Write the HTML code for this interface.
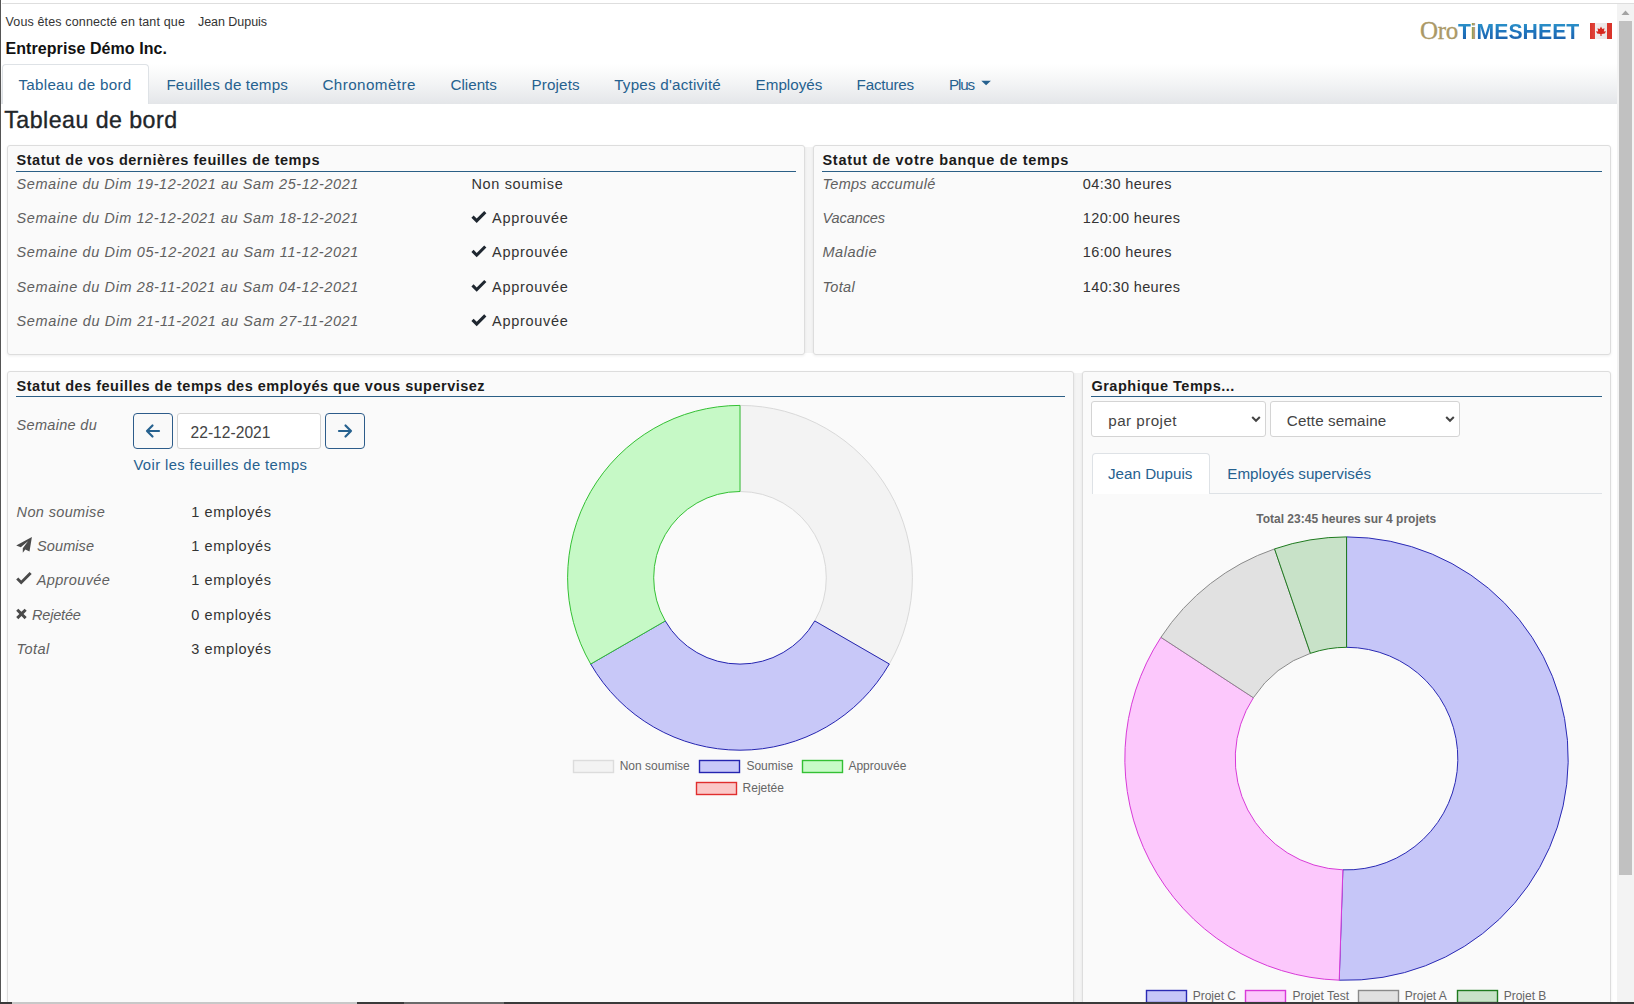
<!DOCTYPE html>
<html lang="fr">
<head>
<meta charset="utf-8">
<title>Tableau de bord - OroTimesheet</title>
<style>
html,body{margin:0;padding:0;}
body{width:1634px;height:1004px;overflow:hidden;position:relative;background:#fff;font-family:"Liberation Sans",sans-serif;}
.t{position:absolute;white-space:nowrap;line-height:1;font-family:"Liberation Sans",sans-serif;}
.b{position:absolute;box-sizing:border-box;}
.card{position:absolute;box-sizing:border-box;background:#fafafa;border:1px solid #dddddd;border-radius:3px;box-shadow:0 1px 3px rgba(0,0,0,.07);}
.hl{position:absolute;height:1px;background:#2b5f86;}
svg{position:absolute;left:0;top:0;overflow:visible;}
</style>
</head>
<body>
<!-- window frame -->
<div class="b" style="left:0;top:0;width:1px;height:1004px;background:#555;"></div>
<div class="b" style="left:2px;top:3px;width:1632px;height:1px;background:#dedede;"></div>

<!-- nav bar -->
<div class="b" style="left:1px;top:64px;width:1616px;height:40px;background:linear-gradient(#ffffff 0%,#f4f5f6 45%,#e4e6e9 100%);"></div>
<div class="b" style="left:1.5px;top:64px;width:147.5px;height:40px;background:#fff;border:1px solid #dee2e6;border-bottom:none;border-radius:4px 4px 0 0;"></div>
<svg width="1634" height="1004" style="pointer-events:none">
  <path d="M981.3,80.8 L990.9,80.8 L986.1,85.2 Z" fill="#26618f"/>
</svg>

<!-- logo -->
<div class="t" style="left:1420px;top:18px;font-family:'Liberation Serif',serif;font-size:25px;color:#ab9966;letter-spacing:-0.3px;-webkit-text-stroke:0.3px #ab9966;">Oro</div>
<div class="t" style="left:1458px;top:21px;font-size:21.2px;font-weight:bold;letter-spacing:0.05px;background:linear-gradient(#2f9ccc 0%,#2077bf 45%,#1a5eaa 100%);-webkit-background-clip:text;background-clip:text;color:transparent;">T<span style="-webkit-text-fill-color:#b39f63;">i</span>MESHEET</div>
<div class="b" style="left:1590px;top:23px;width:22px;height:16px;background:linear-gradient(90deg,#d9342a 0,#e0463c 5px,#f2eeee 5px,#e9e4e4 17px,#d9342a 17px);"></div>
<svg width="1634" height="1004"><path d="M1601,26.5 L1602.3,29 L1604.5,28.2 L1603.8,31.5 L1606,31.2 L1604.8,33.5 L1601.6,34 L1601.6,36 L1600.4,36 L1600.4,34 L1597.2,33.5 L1596,31.2 L1598.2,31.5 L1597.5,28.2 L1599.7,29 Z" fill="#d7261c"/></svg>

<!-- scrollbar -->
<div class="b" style="left:1617px;top:4px;width:17px;height:998px;background:#f3f3f3;"></div>
<div class="b" style="left:1619px;top:21px;width:13px;height:854px;background:#c1c1c1;"></div>
<svg width="1634" height="1004"><path d="M1621.5,15 L1629.5,15 L1625.5,10.5 Z" fill="#a3a3a3"/></svg>

<!-- cards -->
<div class="b" style="left:803px;top:147px;width:12px;height:206px;background:#f4f4f4;"></div>
<div class="b" style="left:1072px;top:373px;width:12px;height:640px;background:#f4f4f4;"></div>
<div class="card" style="left:7px;top:145px;width:798px;height:210px;"></div>
<div class="card" style="left:813px;top:145px;width:798px;height:210px;"></div>
<div class="card" style="left:7px;top:371px;width:1067px;height:660px;"></div>
<div class="card" style="left:1082px;top:371px;width:529px;height:660px;"></div>

<div class="hl" style="left:16px;top:171px;width:780px;"></div>
<div class="hl" style="left:822px;top:171px;width:780px;"></div>
<div class="hl" style="left:16px;top:396px;width:1049px;"></div>
<div class="hl" style="left:1091px;top:396px;width:511px;"></div>

<!-- card3 controls -->
<div class="b" style="left:133px;top:413px;width:40px;height:36px;border:1.3px solid #2d5c8a;border-radius:4px;background:#f9f9f9;"></div>
<div class="b" style="left:177px;top:413px;width:144px;height:36px;border:1px solid #d4d4d4;border-radius:3px;background:#fff;"></div>
<div class="b" style="left:325px;top:413px;width:40px;height:36px;border:1.3px solid #2d5c8a;border-radius:4px;background:#f9f9f9;"></div>

<!-- card4 controls -->
<div class="b" style="left:1091px;top:401px;width:175px;height:36px;border:1px solid #d4d4d4;border-radius:3px;background:#fff;"></div>
<div class="b" style="left:1270px;top:401px;width:190px;height:36px;border:1px solid #d4d4d4;border-radius:3px;background:#fff;"></div>
<div class="b" style="left:1209px;top:493px;width:393px;height:1px;background:#dee2e6;"></div>
<div class="b" style="left:1091.5px;top:453px;width:118.5px;height:41px;border:1px solid #dee2e6;border-bottom:none;border-radius:4px 4px 0 0;background:#fff;"></div>

<!-- icons -->
<svg width="1634" height="1004">
  <!-- card1 checks -->
  <g fill="#1f2730">
    <path transform="translate(471.4,211.5)" d="M0,6.2 L2.2,4 L5.3,7.1 L12.8,-0.4 L15,1.8 L5.3,11.5 Z"/>
    <path transform="translate(471.4,245.8)" d="M0,6.2 L2.2,4 L5.3,7.1 L12.8,-0.4 L15,1.8 L5.3,11.5 Z"/>
    <path transform="translate(471.4,280.3)" d="M0,6.2 L2.2,4 L5.3,7.1 L12.8,-0.4 L15,1.8 L5.3,11.5 Z"/>
    <path transform="translate(471.4,314.7)" d="M0,6.2 L2.2,4 L5.3,7.1 L12.8,-0.4 L15,1.8 L5.3,11.5 Z"/>
  </g>
  <!-- card3 icons -->
  <g fill="#4a4a4a">
    <path d="M31.9,537 L16.2,545.5 L20.8,547.3 L28,541.2 L22.8,548.3 L22.8,552.7 L25.3,549.6 L29.5,551.4 Z"/>
    <path d="M16.2,578.6 L18.3,576.5 L21.2,579.4 L29.6,571 L31.7,573.1 L21.2,583.6 Z" transform="translate(0,1)"/>
    <path d="M16.2,610.8 L18.3,608.7 L21.45,611.85 L24.6,608.7 L26.7,610.8 L23.55,613.95 L26.7,617.1 L24.6,619.2 L21.45,616.05 L18.3,619.2 L16.2,617.1 L19.35,613.95 Z"/>
  </g>
  <!-- arrows -->
  <g fill="none" stroke="#26618f" stroke-width="2.2" stroke-linecap="round" stroke-linejoin="round">
    <path d="M159,431 L147,431 M152.5,425.5 L147,431 L152.5,436.5"/>
    <path d="M339,431 L351,431 M345.5,425.5 L351,431 L345.5,436.5"/>
  </g>
  <!-- select chevrons -->
  <g fill="none" stroke="#444" stroke-width="2" stroke-linecap="butt" stroke-linejoin="miter">
    <path d="M1252.2,417 L1256,420.8 L1259.8,417"/>
    <path d="M1446.2,417 L1450,420.8 L1453.8,417"/>
  </g>
  <!-- charts -->
  <path d="M740.00,405.40 A172.4,172.4 0 0 1 889.30,664.00 L814.74,620.95 A86.3,86.3 0 0 0 740.00,491.50 Z" fill="#f3f3f3" stroke="#d9d9d9" stroke-width="1"/><path d="M889.30,664.00 A172.4,172.4 0 0 1 590.70,664.00 L665.26,620.95 A86.3,86.3 0 0 0 814.74,620.95 Z" fill="#c8c8f8" stroke="#2424b0" stroke-width="1"/><path d="M590.70,664.00 A172.4,172.4 0 0 1 740.00,405.40 L740.00,491.50 A86.3,86.3 0 0 0 665.26,620.95 Z" fill="#c6f9c6" stroke="#34c034" stroke-width="1"/>
  <path d="M1346.55,536.90 A221.7,221.7 0 1 1 1339.22,980.18 L1342.87,869.84 A111.3,111.3 0 1 0 1346.55,647.30 Z" fill="#c6c6f8" stroke="#2a2ab4" stroke-width="1"/><path d="M1339.22,980.18 A221.7,221.7 0 0 1 1160.95,637.34 L1253.37,697.72 A111.3,111.3 0 0 0 1342.87,869.84 Z" fill="#fcc8fc" stroke="#d83ad8" stroke-width="1"/><path d="M1160.95,637.34 A221.7,221.7 0 0 1 1274.56,548.91 L1310.41,653.33 A111.3,111.3 0 0 0 1253.37,697.72 Z" fill="#e1e1e1" stroke="#8a8a8a" stroke-width="1"/><path d="M1274.56,548.91 A221.7,221.7 0 0 1 1346.55,536.90 L1346.55,647.30 A111.3,111.3 0 0 0 1310.41,653.33 Z" fill="#c8e2c8" stroke="#1e7a1e" stroke-width="1"/>
  <!-- legend boxes -->
  <g stroke-width="1.4">
    <rect x="573.5" y="760.5" width="40" height="12" fill="#f3f3f3" stroke="#dcdcdc"/>
    <rect x="699.5" y="760.5" width="40" height="12" fill="#c8c8f9" stroke="#2424b0"/>
    <rect x="802.5" y="760.5" width="40" height="12" fill="#c8fbc8" stroke="#34c034"/>
    <rect x="696.5" y="782.5" width="40" height="12" fill="#fbc8c8" stroke="#e02e2e"/>
    <rect x="1146.5" y="990.5" width="40" height="12" fill="#c6c6f8" stroke="#2a2ab4"/>
    <rect x="1245.5" y="990.5" width="40" height="12" fill="#fcc8fc" stroke="#d83ad8"/>
    <rect x="1358.5" y="990.5" width="40" height="12" fill="#e1e1e1" stroke="#8a8a8a"/>
    <rect x="1457.5" y="990.5" width="40" height="12" fill="#c8e2c8" stroke="#1e7a1e"/>
  </g>
</svg>

<div class="t" style="left:5.50px;top:16px;font-size:12.5px;letter-spacing:0.145px;color:#333">Vous êtes connecté en tant que</div>
<div class="t" style="left:198.00px;top:16px;font-size:12.5px;letter-spacing:-0.045px;color:#333">Jean Dupuis</div>
<div class="t" style="left:5.50px;top:41px;font-size:16px;letter-spacing:0.073px;color:#111;font-weight:bold">Entreprise Démo Inc.</div>
<div class="t" style="left:18.40px;top:77px;font-size:15.2px;letter-spacing:0.284px;color:#26618f">Tableau de bord</div>
<div class="t" style="left:166.40px;top:77px;font-size:15.2px;letter-spacing:0.151px;color:#26618f">Feuilles de temps</div>
<div class="t" style="left:322.40px;top:77px;font-size:15.2px;letter-spacing:0.442px;color:#26618f">Chronomètre</div>
<div class="t" style="left:450.40px;top:77px;font-size:15.2px;letter-spacing:0.023px;color:#26618f">Clients</div>
<div class="t" style="left:531.60px;top:77px;font-size:15.2px;letter-spacing:0.117px;color:#26618f">Projets</div>
<div class="t" style="left:614.20px;top:77px;font-size:15.2px;letter-spacing:0.215px;color:#26618f">Types d'activité</div>
<div class="t" style="left:755.60px;top:77px;font-size:15.2px;letter-spacing:0.002px;color:#26618f">Employés</div>
<div class="t" style="left:856.60px;top:77px;font-size:15.2px;letter-spacing:-0.212px;color:#26618f">Factures</div>
<div class="t" style="left:949.00px;top:77px;font-size:15.2px;letter-spacing:-1.137px;color:#26618f">Plus</div>
<div class="t" style="left:4.30px;top:109px;font-size:23.2px;letter-spacing:0.459px;color:#212529;-webkit-text-stroke:0.35px #212529">Tableau de bord</div>
<div class="t" style="left:16.50px;top:153px;font-size:14.5px;letter-spacing:0.523px;color:#1b1b1b;font-weight:bold">Statut de vos dernières feuilles de temps</div>
<div class="t" style="left:16.50px;top:177px;font-size:14.5px;letter-spacing:0.579px;color:#606060;font-style:italic">Semaine du Dim 19-12-2021 au Sam 25-12-2021</div>
<div class="t" style="left:16.50px;top:211px;font-size:14.5px;letter-spacing:0.579px;color:#606060;font-style:italic">Semaine du Dim 12-12-2021 au Sam 18-12-2021</div>
<div class="t" style="left:16.50px;top:245px;font-size:14.5px;letter-spacing:0.604px;color:#606060;font-style:italic">Semaine du Dim 05-12-2021 au Sam 11-12-2021</div>
<div class="t" style="left:16.50px;top:280px;font-size:14.5px;letter-spacing:0.604px;color:#606060;font-style:italic">Semaine du Dim 28-11-2021 au Sam 04-12-2021</div>
<div class="t" style="left:16.50px;top:314px;font-size:14.5px;letter-spacing:0.629px;color:#606060;font-style:italic">Semaine du Dim 21-11-2021 au Sam 27-11-2021</div>
<div class="t" style="left:471.40px;top:177px;font-size:14.5px;letter-spacing:0.670px;color:#333">Non soumise</div>
<div class="t" style="left:492.00px;top:211px;font-size:14.5px;letter-spacing:0.707px;color:#333">Approuvée</div>
<div class="t" style="left:492.00px;top:245px;font-size:14.5px;letter-spacing:0.707px;color:#333">Approuvée</div>
<div class="t" style="left:492.00px;top:280px;font-size:14.5px;letter-spacing:0.707px;color:#333">Approuvée</div>
<div class="t" style="left:492.00px;top:314px;font-size:14.5px;letter-spacing:0.707px;color:#333">Approuvée</div>
<div class="t" style="left:822.50px;top:153px;font-size:14.5px;letter-spacing:0.700px;color:#1b1b1b;font-weight:bold">Statut de votre banque de temps</div>
<div class="t" style="left:822.50px;top:177px;font-size:14.5px;letter-spacing:0.280px;color:#606060;font-style:italic">Temps accumulé</div>
<div class="t" style="left:1082.80px;top:177px;font-size:14.5px;letter-spacing:0.362px;color:#333">04:30 heures</div>
<div class="t" style="left:822.50px;top:211px;font-size:14.5px;letter-spacing:-0.080px;color:#606060;font-style:italic">Vacances</div>
<div class="t" style="left:1082.80px;top:211px;font-size:14.5px;letter-spacing:0.368px;color:#333">120:00 heures</div>
<div class="t" style="left:822.50px;top:245px;font-size:14.5px;letter-spacing:0.531px;color:#606060;font-style:italic">Maladie</div>
<div class="t" style="left:1082.80px;top:245px;font-size:14.5px;letter-spacing:0.362px;color:#333">16:00 heures</div>
<div class="t" style="left:822.50px;top:280px;font-size:14.5px;letter-spacing:0.319px;color:#606060;font-style:italic">Total</div>
<div class="t" style="left:1082.80px;top:280px;font-size:14.5px;letter-spacing:0.368px;color:#333">140:30 heures</div>
<div class="t" style="left:16.60px;top:379px;font-size:14.5px;letter-spacing:0.494px;color:#1b1b1b;font-weight:bold">Statut des feuilles de temps des employés que vous supervisez</div>
<div class="t" style="left:16.60px;top:418px;font-size:14.5px;letter-spacing:0.311px;color:#606060;font-style:italic">Semaine du</div>
<div class="t" style="left:190.50px;top:425px;font-size:15.6px;letter-spacing:0.022px;color:#444">22-12-2021</div>
<div class="t" style="left:133.40px;top:458px;font-size:14.8px;letter-spacing:0.397px;color:#26618f">Voir les feuilles de temps</div>
<div class="t" style="left:16.60px;top:505px;font-size:14.5px;letter-spacing:0.352px;color:#606060;font-style:italic">Non soumise</div>
<div class="t" style="left:37.10px;top:539px;font-size:14.5px;letter-spacing:0.083px;color:#606060;font-style:italic">Soumise</div>
<div class="t" style="left:36.70px;top:573px;font-size:14.5px;letter-spacing:0.373px;color:#606060;font-style:italic">Approuvée</div>
<div class="t" style="left:32.10px;top:608px;font-size:14.5px;letter-spacing:-0.212px;color:#606060;font-style:italic">Rejetée</div>
<div class="t" style="left:16.60px;top:642px;font-size:14.5px;letter-spacing:0.419px;color:#606060;font-style:italic">Total</div>
<div class="t" style="left:191.20px;top:505px;font-size:14.5px;letter-spacing:0.634px;color:#333">1 employés</div>
<div class="t" style="left:191.20px;top:539px;font-size:14.5px;letter-spacing:0.634px;color:#333">1 employés</div>
<div class="t" style="left:191.20px;top:573px;font-size:14.5px;letter-spacing:0.634px;color:#333">1 employés</div>
<div class="t" style="left:191.20px;top:608px;font-size:14.5px;letter-spacing:0.634px;color:#333">0 employés</div>
<div class="t" style="left:191.20px;top:642px;font-size:14.5px;letter-spacing:0.634px;color:#333">3 employés</div>
<div class="t" style="left:1091.40px;top:379px;font-size:14.5px;letter-spacing:0.512px;color:#1b1b1b;font-weight:bold">Graphique Temps...</div>
<div class="t" style="left:1108.30px;top:413px;font-size:15.2px;letter-spacing:0.453px;color:#444">par projet</div>
<div class="t" style="left:1286.80px;top:413px;font-size:15.2px;letter-spacing:0.120px;color:#444">Cette semaine</div>
<div class="t" style="left:1108.00px;top:466px;font-size:15.2px;letter-spacing:-0.003px;color:#26618f">Jean Dupuis</div>
<div class="t" style="left:1227.30px;top:466px;font-size:15.2px;letter-spacing:0.011px;color:#26618f">Employés supervisés</div>
<div class="t" style="left:1256.28px;top:513px;font-size:12px;letter-spacing:0.000px;color:#666;font-weight:bold">Total 23:45 heures sur 4 projets</div>
<div class="t" style="left:619.70px;top:760px;font-size:12px;letter-spacing:0.000px;color:#666">Non soumise</div>
<div class="t" style="left:746.40px;top:760px;font-size:12px;letter-spacing:0.000px;color:#666">Soumise</div>
<div class="t" style="left:848.40px;top:760px;font-size:12px;letter-spacing:0.000px;color:#666">Approuvée</div>
<div class="t" style="left:742.60px;top:782px;font-size:12px;letter-spacing:0.000px;color:#666">Rejetée</div>
<div class="t" style="left:1192.70px;top:990px;font-size:12px;letter-spacing:0.000px;color:#666">Projet C</div>
<div class="t" style="left:1292.50px;top:990px;font-size:12px;letter-spacing:0.000px;color:#666">Projet Test</div>
<div class="t" style="left:1404.80px;top:990px;font-size:12px;letter-spacing:0.000px;color:#666">Projet A</div>
<div class="t" style="left:1503.70px;top:990px;font-size:12px;letter-spacing:0.000px;color:#666">Projet B</div>

<!-- bottom taskbar edge -->
<div class="b" style="left:0;top:1002px;width:1634px;height:2px;background:#3a3a3a;"></div>
<div class="b" style="left:12px;top:1002px;width:345px;height:2px;background:#c8c8c8;"></div>
<div class="b" style="left:404px;top:1002px;width:100px;height:2px;background:#6a6a6a;"></div>
</body>
</html>
